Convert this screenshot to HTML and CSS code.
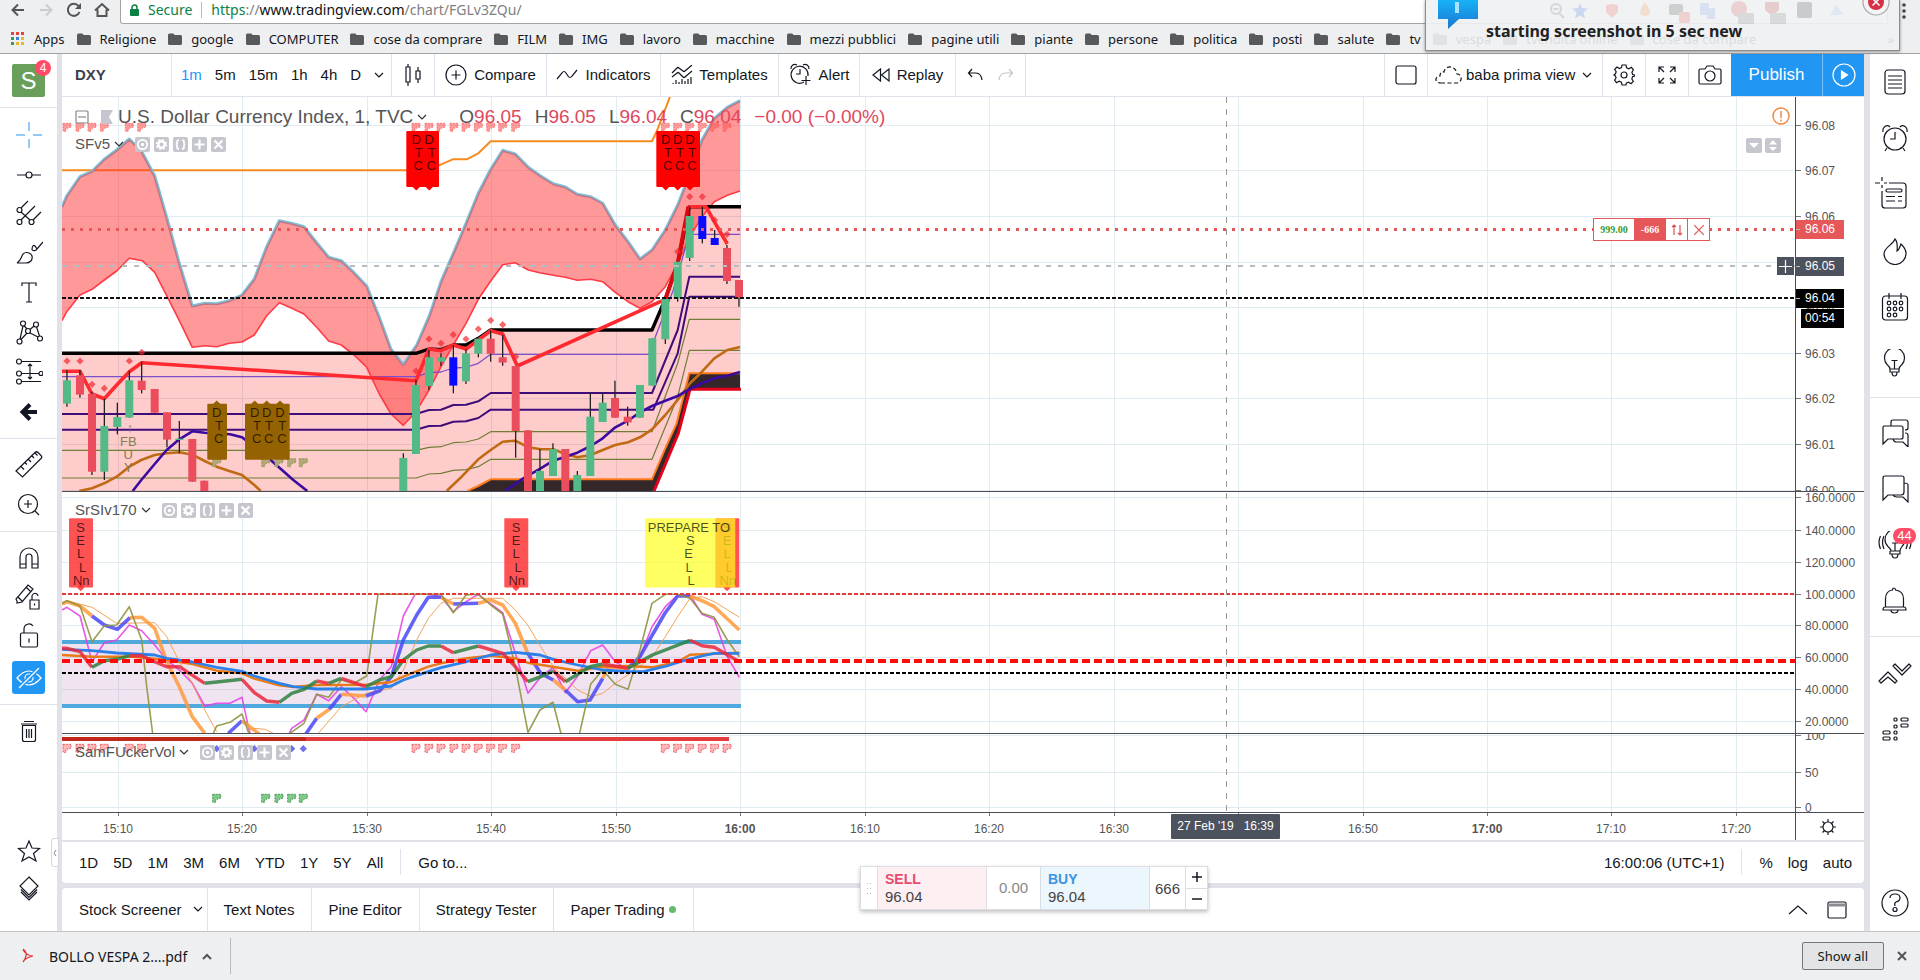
FILE: index.html
```html
<!DOCTYPE html>
<html lang="en">
<head>
<meta charset="utf-8">
<title>DXY chart</title>
<link rel="stylesheet" href="styles.css">
</head>
<body>
<svg class="defs" aria-hidden="true">
  <symbol id="folder" viewBox="0 0 14 12"><path d="M0 2a1.500 1.500 0 0 1 1.500-1.500h3.500q1 0 1.500 1.500h6a1.500 1.500 0 0 1 1.500 1.500v7a1.500 1.500 0 0 1-1.500 1.500h-11a1.500 1.500 0 0 1-1.500-1.500z" fill="#57595a"/></symbol>
  <symbol id="caret" viewBox="0 0 10 6"><path d="M1 1l4 4 4-4"/></symbol>
  <symbol id="i-eye" viewBox="0 0 15 15"><rect width="15" height="15" rx="2" fill="#c5c6ce"/><circle cx="7.500" cy="7.500" r="4.700" fill="none" stroke="#fff" stroke-width="1.800"/><circle cx="7.500" cy="7.500" r="1.700" fill="#fff"/></symbol>
  <symbol id="i-gear" viewBox="0 0 15 15"><rect width="15" height="15" rx="2" fill="#c5c6ce"/><circle cx="7.500" cy="7.500" r="3.200" fill="none" stroke="#fff" stroke-width="2.400"/><circle cx="7.500" cy="7.500" r="4.800" fill="none" stroke="#fff" stroke-width="1.600" stroke-dasharray="2 1.770"/></symbol>
  <symbol id="i-code" viewBox="0 0 15 15"><rect width="15" height="15" rx="2" fill="#c5c6ce"/><path d="M6 3q-2 0-2 2v1.500q0 1-1.200 1Q4 7.500 4 8.500V10q0 2 2 2M9 3q2 0 2 2v1.500q0 1 1.200 1-1.200 0-1.200 1V10q0 2-2 2" fill="none" stroke="#fff" stroke-width="1.700"/></symbol>
  <symbol id="i-plus" viewBox="0 0 15 15"><rect width="15" height="15" rx="2" fill="#c5c6ce"/><path d="M7.500 2.500v10M2.500 7.500h10" stroke="#fff" stroke-width="2.200"/></symbol>
  <symbol id="i-x" viewBox="0 0 15 15"><rect width="15" height="15" rx="2" fill="#c5c6ce"/><path d="M3.500 3.500l8 8M11.500 3.500l-8 8" stroke="#fff" stroke-width="2.200"/></symbol>
</svg>

<header class="browser">
  <div class="nav">
    <div class="nav-buttons">
      <button aria-label="Back"><svg width="16" height="16" viewBox="0 0 16 16"><path d="M14 8H3M8 2.500L2.500 8 8 13.500" stroke="#555" stroke-width="2"/></svg></button>
      <button aria-label="Forward"><svg width="16" height="16" viewBox="0 0 16 16"><path d="M2 8h11M8 2.500L13.500 8 8 13.500" stroke="#ccc" stroke-width="2"/></svg></button>
      <button aria-label="Reload"><svg width="16" height="16" viewBox="0 0 16 16"><path d="M13.500 10A6 6 0 1 1 12.500 4" stroke="#555" stroke-width="2"/><path d="M15 1v6H9z" fill="#555" stroke="none"/></svg></button>
      <button aria-label="Home"><svg width="16" height="16" viewBox="0 0 16 16"><path d="M1 8.500L8 2l7 6.500M3.500 7.500V14h9V7.500" stroke="#555" stroke-width="2"/></svg></button>
    </div>
    <div class="omnibox">
      <svg width="9" height="12" viewBox="0 0 9 12"><path d="M2 6V3.500a2.500 2.500 0 0 1 5 0V6" fill="none" stroke="#0b8043" stroke-width="1.500"/><rect y="5" width="9" height="7" rx="1" fill="#0b8043"/></svg>
      <span class="secure">Secure</span><span class="bar"></span>
      <span class="url"><b class="ok">https</b>://<b>www.tradingview.com</b>/chart/FGLv3ZQu/</span>
    </div>
    <svg class="dots" width="4" height="17" viewBox="0 0 4 17"><circle cx="2" cy="2" r="1.800"/><circle cx="2" cy="8" r="1.800"/><circle cx="2" cy="14" r="1.800"/></svg>
  </div>
  <nav class="bookmarks">
    <a href="#"><svg width="14" height="14" viewBox="0 0 14 14"><path d="M0 0h3v3H0zM5 0h3v3H5zM10 0h3v3h-3z" fill="#e0443a"/><path d="M0 5h3v3H0zM0 10h3v3H0z" fill="#3b9a50"/><path d="M5 5h3v3H5z" fill="#3d7fe0"/><path d="M10 5h3v3h-3zM5 10h3v3H5zM10 10h3v3h-3z" fill="#efb52c"/></svg>Apps</a>
    <a href="#"><svg width="14" height="12"><use href="#folder"/></svg>Religione</a>
    <a href="#"><svg width="14" height="12"><use href="#folder"/></svg>google</a>
    <a href="#"><svg width="14" height="12"><use href="#folder"/></svg>COMPUTER</a>
    <a href="#"><svg width="14" height="12"><use href="#folder"/></svg>cose da comprare</a>
    <a href="#"><svg width="14" height="12"><use href="#folder"/></svg>FILM</a>
    <a href="#"><svg width="14" height="12"><use href="#folder"/></svg>IMG</a>
    <a href="#"><svg width="14" height="12"><use href="#folder"/></svg>lavoro</a>
    <a href="#"><svg width="14" height="12"><use href="#folder"/></svg>macchine</a>
    <a href="#"><svg width="14" height="12"><use href="#folder"/></svg>mezzi pubblici</a>
    <a href="#"><svg width="14" height="12"><use href="#folder"/></svg>pagine utili</a>
    <a href="#"><svg width="14" height="12"><use href="#folder"/></svg>piante</a>
    <a href="#"><svg width="14" height="12"><use href="#folder"/></svg>persone</a>
    <a href="#"><svg width="14" height="12"><use href="#folder"/></svg>politica</a>
    <a href="#"><svg width="14" height="12"><use href="#folder"/></svg>posti</a>
    <a href="#"><svg width="14" height="12"><use href="#folder"/></svg>salute</a>
    <a href="#"><svg width="14" height="12"><use href="#folder"/></svg>tv</a>
    <a href="#"><svg width="14" height="12"><use href="#folder"/></svg>vespa</a>
    <a href="#"><svg width="14" height="12"><use href="#folder"/></svg>tvendita online</a>
    <a href="#"><svg width="14" height="12"><use href="#folder"/></svg>cose da compare</a>
    <span class="more">»</span>
  </nav>
</header>

<aside class="toast">
  <svg class="toast-ext" width="320" height="28" viewBox="0 0 320 28">
    <circle cx="8" cy="9" r="5" fill="none" stroke="#777" stroke-width="2"/><path d="M11 13l5 5M5.500 9h5" stroke="#777" stroke-width="2"/>
    <path d="M32 3l2 5 6 .5-4.500 4 1.500 6-5-3-5 3 1.500-6-4.500-4 6-.5z" fill="#4a86e8"/>
    <path d="M58 5l6-1 6 1v7l-6 6-6-6z" fill="#f0635f"/><path d="M97 3q6 6 5 11-4 4-10 0 0-4 4-11z" fill="#f39a48"/>
    <rect x="121" y="4" width="14" height="11" rx="2" fill="#555"/><rect x="131" y="12" width="11" height="11" rx="2" fill="#f06060"/>
    <path d="M152 3h9v12h-9zM159 8h8v11h-8z" fill="#7fa8e8"/><circle cx="191" cy="9" r="8" fill="#e05c5c"/><rect x="190" y="13" width="16" height="11" rx="1" fill="#888"/>
    <path d="M217 2h14v8l-7 6-7-6z" fill="#c84a4a"/><rect x="222" y="13" width="16" height="11" rx="1" fill="#888"/><rect x="249" y="2" width="15" height="16" rx="2" fill="#444"/><path d="M282 15l6-10 8 10z" fill="#a9c4f0"/>
  </svg>
  <svg class="bubble" width="40" height="30" viewBox="0 0 40 30"><defs><linearGradient id="bg1" x2="0" y2="1"><stop stop-color="#17b2f5"/><stop offset="1" stop-color="#1b76d0"/></linearGradient></defs><path d="M0 0h40v19H21L10 29V19H0z" fill="url(#bg1)"/><path d="M19 2v11" stroke="#a9e2ff" stroke-width="4"/></svg>
  <strong>starting screenshot in 5 sec new</strong>
  <button class="toast-close" aria-label="Close"><svg width="28" height="28" viewBox="0 0 28 28"><circle cx="14" cy="14" r="13" fill="#f4f4f4" stroke="#aaa"/><circle cx="14" cy="14" r="8" fill="#d9304a"/><path d="M10.500 10.500l7 7M17.500 10.500l-7 7" stroke="#fff" stroke-width="1.500"/></svg></button>
</aside>

<main class="app">
  <aside class="tools">
    <div class="avatar-box"><div class="avatar">S<span class="badge">4</span></div></div>
    <div class="group g1">
      <button aria-label="Cross"><svg class="blue" viewBox="0 0 28 28"><path d="M14 1v9M14 18v9M1 14h9M18 14h9"/></svg></button>
      <button aria-label="Line"><svg viewBox="0 0 28 28"><path d="M2 14h9M17 14h9"/><circle cx="14" cy="14" r="3"/></svg></button>
      <button aria-label="Pitchfork"><svg viewBox="0 0 28 28"><circle cx="4.500" cy="10" r="2.500"/><circle cx="4.500" cy="22" r="2.500"/><circle cx="16.500" cy="22" r="2.500"/><path d="M6 8l7-7M6 20L20 6M6 12l9 8M18 20l8-8"/></svg></button>
      <button aria-label="Brush"><svg viewBox="0 0 28 28"><path d="M2 23c4-2 4-6 6-9 3-3 8-1 9 2 1 4-2 7-6 7zM17 10c0-5 2-5 3-4l2 3 6-7M17 10c2 1 4 1 5-1"/></svg></button>
      <button aria-label="Text"><svg viewBox="0 0 28 28"><path d="M7 7V4h14v3M14 4v19M11 23h6"/></svg></button>
      <button aria-label="Pattern"><svg viewBox="0 0 28 28"><circle cx="8" cy="4.500" r="2.500"/><circle cx="21" cy="5.500" r="2.500"/><circle cx="13" cy="12" r="2.500"/><circle cx="4.500" cy="22.500" r="2.500"/><circle cx="25" cy="19.500" r="2.500"/><path d="M8 7L5 20M6 20.500l6-6.500M9 6.500l3 3.500M15 10.500l4-3.500M21.500 8L24.500 17M15 14l8 4"/></svg></button>
      <button aria-label="Position"><svg viewBox="0 0 28 28"><circle cx="4" cy="3.500" r="2.500"/><circle cx="4" cy="15.500" r="2.500"/><circle cx="26" cy="15.500" r="2"/><circle cx="4" cy="23.500" r="2.500"/><path d="M7 3.500h19M7 15.500h17M7 23.500h19M15 6v15M13 8l2-2 2 2M13 19l2 2 2-2"/></svg></button>
      <button aria-label="Arrow"><svg viewBox="0 0 28 28"><path d="M22 14H9M15 6.500L7.500 14l7.500 7.500" stroke-width="4"/></svg></button>
    </div>
    <div class="group g2">
      <button aria-label="Ruler"><svg viewBox="0 0 28 28"><path d="M1 20L20 1.500q1.500-1.500 3 0l3 3q1.500 1.500 0 3L7.500 26zM6 15.500l3 3M10 11.500l2 2M13 8l3 3M17 5l2 2M20 2l2.500 2.500"/></svg></button>
      <button aria-label="Zoom in"><svg viewBox="0 0 28 28"><circle cx="13" cy="13" r="9.500"/><path d="M20 20l4 4M9 13h8M13 9v8"/></svg></button>
    </div>
    <div class="group g3">
      <button aria-label="Magnet"><svg viewBox="0 0 28 28"><path d="M5 24V13a9 9 0 0 1 18 0v11h-6V13a3 3 0 0 0-6 0v11zM5 20h6M17 20h6"/></svg></button>
      <button aria-label="Lock drawing"><svg viewBox="0 0 28 28"><path d="M2 18L1 16 13 2l5 4L7 19l-5 1zM3 14l4 4M11 4l5 5M15 17h9v9h-9zM17 17v-3a3 3 0 0 1 6-1M19.500 20.500v2"/></svg></button>
      <button aria-label="Lock"><svg viewBox="0 0 28 28"><rect x="5.500" y="11" width="17" height="14" rx="1.500"/><path d="M9 11V7a5 5 0 0 1 9-3M14 16.500v4" /></svg></button>
      <button class="active" aria-label="Hide drawings"><svg viewBox="0 0 28 28"><path d="M2 14q12-14 24 0-12 14-24 0z"/><circle cx="14" cy="14" r="4"/><path d="M4 24L24 4" stroke="#2196f3" stroke-width="4"/><path d="M4 24L24 4"/></svg></button>
    </div>
    <div class="group g4">
      <button aria-label="Delete"><svg viewBox="0 0 28 28"><path d="M6 7h16M9 4.500h10M7.500 8.500v14q0 2 2 2h9q2 0 2-2v-14zM11.500 12v9M14 12v9M16.500 12v9"/></svg></button>
    </div>
    <div class="group g5">
      <button aria-label="Favorites"><svg viewBox="0 0 28 28"><path d="M14 4l3 7 7.500.5-6 5 2.500 7.500-7-4-7 4 2.500-7.500-6-5 7.500-.5z"/></svg></button>
      <button aria-label="Object tree"><svg viewBox="0 0 28 28"><path d="M14 2l9 9-9 9-9-9zM6 14.500l8 8 8-8M6 17l8 8 8-8"/></svg></button>
    </div>
    <button class="collapse" aria-label="Collapse"><svg width="4" height="8" viewBox="0 0 4 8"><path d="M3 1L1 4l2 3" stroke="#888" stroke-width="1"/></svg></button>
  </aside>

  <section class="center">
    <div class="topbar">
      <label class="seg symbol"><input type="text" value="DXY" aria-label="Symbol"></label>
      <div class="seg intervals"><button class="on">1m</button><button>5m</button><button>15m</button><button>1h</button><button>4h</button><button>D</button><button aria-label="More"><svg width="10" height="6"><use href="#caret"/></svg></button></div>
      <button class="seg candles" aria-label="Style"><svg width="16" height="22" viewBox="0 0 16 22"><path d="M3 0v3M3 18v4M1 3h4v15H1zM13 3v4M13 15v4M11 7h4v8h-4z"/></svg></button>
      <button class="seg compare"><svg width="22" height="22" viewBox="0 0 22 22"><circle cx="11" cy="11" r="10"/><path d="M11 6.500v9M6.500 11h9"/></svg>Compare</button>
      <button class="seg indicators"><svg width="22" height="12" viewBox="0 0 22 12"><path d="M1 10l5-6q2-3 4 0l2 3q2 3 4 0l5-6"/></svg>Indicators</button>
      <button class="seg templates"><svg width="22" height="20" viewBox="0 0 22 20"><path d="M1 8l5-5q1-1 2 0l4 3q1 1 2 0l7-6M1 12l5-4q1-1 2 0l4 4q1 1 2 0l7-6M2 19v-1M5 19v-4M8 19v-2M11 19v-5M14 19v-3M17 19v-5M20 19v-7"/></svg>Templates</button>
      <button class="seg alert"><svg width="23" height="23" viewBox="0 0 23 23"><path d="M15 19a8.500 8.500 0 1 1 4-6M2 6a4 4 0 0 1 6-4M14 2a4 4 0 0 1 6 4M11 6v5H7M17 13v9M12.500 17.500h9"/></svg>Alert</button>
      <button class="seg replay"><svg width="18" height="14" viewBox="0 0 18 14"><path d="M8.500 1v12L1 7zM17 1v12L9.500 7z"/></svg>Replay</button>
      <div class="seg undo"><button aria-label="Undo"><svg width="16" height="13" viewBox="0 0 16 13"><path d="M5 1L1.500 5 5 9M2 5h7q5 0 6 7"/></svg></button><button class="off" aria-label="Redo"><svg width="16" height="13" viewBox="0 0 16 13"><path d="M11 1l3.500 4L11 9M14 5H7Q2 5 1 12"/></svg></button></div>
      <span class="grow"></span>
      <button class="seg square" aria-label="Layout"><svg width="22" height="20" viewBox="0 0 22 20"><rect x="1" y="1" width="20" height="18" rx="2"/></svg></button>
      <button class="seg view"><svg width="27" height="18" viewBox="0 0 27 18"><path d="M6 17h16c6-1 5-9 0-9-1-9-12-9-13-2-4-1-4 3-4 4-6 1-5 7 1 7z" stroke-dasharray="4 2.500"/></svg>baba prima view<svg class="push" width="10" height="6"><use href="#caret"/></svg></button>
      <button class="seg square" aria-label="Settings"><svg width="22" height="22" viewBox="0 0 22 22"><path d="M9 1h4l.6 2.800 2.300 1 2.500-1.500 2 2.500-1.500 2.400.8 2.300 2 .5v1l-2 .6-.9 2.300 1.500 2.400-2.300 2.400-2.400-1.500-2.300.9L13 21H9l-.6-2.800-2.300-1-2.500 1.500-2-2.500 1.500-2.400L2.300 12 .9 11l1.400-1 .9-2.300-1.500-2.400L4 3l2.400 1.500 2.100-.9z"/><circle cx="11" cy="11" r="3"/></svg></button>
      <button class="seg square" aria-label="Full screen"><svg width="20" height="18" viewBox="0 0 20 18"><path d="M2 6V1h5M2 1l5 5M13 1h5v5M18 1l-5 5M2 12v5h5M2 17l5-5M18 12v5h-5M18 17l-5-5"/></svg></button>
      <button class="seg square" aria-label="Snapshot"><svg width="24" height="20" viewBox="0 0 24 20"><path d="M2.500 4H7l2-3h6l2 3h4.500Q23 4 23 5.500v12q0 1.500-1.500 1.500h-19Q1 19 1 17.500v-12Q1 4 2.500 4z"/><circle cx="12" cy="11" r="5"/></svg></button>
      <button class="publish">Publish</button>
      <button class="play" aria-label="Play"><svg width="24" height="24" viewBox="0 0 24 24"><circle cx="12" cy="12" r="11"/><path d="M9.500 8l6 4-6 4z" fill="#fff"/></svg></button>
    </div>

    <div class="chart">
      <svg class="pane" id="price" role="img" aria-label="Price"></svg>
      <svg class="scale" id="price-scale"></svg>
      <svg class="pane ruled" id="rsi" role="img" aria-label="SrSIv170"></svg>
      <svg class="scale ruled" id="rsi-scale"></svg>
      <svg class="pane ruled" id="vol" role="img" aria-label="Volume"></svg>
      <svg class="scale ruled" id="vol-scale"></svg>
      <svg class="pane ruled" id="time"></svg>
      <div class="scale ruled corner"><button aria-label="Scale settings"><svg width="16" height="16" viewBox="0 0 16 16"><circle cx="8" cy="8" r="5"/><path d="M8 0v3M8 13v3M0 8h3M13 8h3M2.500 2.500l2 2M11.500 11.500l2 2M13.500 2.500l-2 2M2.500 13.500l2-2"/></svg></button></div>

      <div class="legend main">
        <svg width="14" height="14" viewBox="0 0 14 14"><rect x="1" y="1" width="12" height="12" rx="1"/><path d="M3 7h8"/></svg>
        <svg class="flag" width="12" height="14" viewBox="0 0 12 14"><path d="M0 0h12L8 7l4 7H0z"/></svg>
        <span>U.S. Dollar Currency Index, 1, TVC</span><svg class="c" width="10" height="6"><use href="#caret"/></svg>
        <span class="ohlc">O<i>96.05</i></span><span class="ohlc">H<i>96.05</i></span><span class="ohlc">L<i>96.04</i></span><span class="ohlc">C<i>96.04</i></span><span class="ohlc"><i>−0.00 (−0.00%)</i></span>
      </div>
      <div class="legend l1"><span>SFv5</span><svg class="c" width="10" height="6"><use href="#caret"/></svg><span class="acts"><svg><use href="#i-eye"/></svg><svg><use href="#i-gear"/></svg><svg><use href="#i-code"/></svg><svg><use href="#i-plus"/></svg><svg><use href="#i-x"/></svg></span></div>
      <div class="legend l2"><span>SrSIv170</span><svg class="c" width="10" height="6"><use href="#caret"/></svg><span class="acts"><svg><use href="#i-eye"/></svg><svg><use href="#i-gear"/></svg><svg><use href="#i-code"/></svg><svg><use href="#i-plus"/></svg><svg><use href="#i-x"/></svg></span></div>
      <div class="legend l3"><span>SamFUckerVol</span><svg class="c" width="10" height="6"><use href="#caret"/></svg><span class="acts"><svg><use href="#i-eye"/></svg><svg><use href="#i-gear"/></svg><svg><use href="#i-code"/></svg><svg><use href="#i-plus"/></svg><svg><use href="#i-x"/></svg></span></div>
      <svg class="warn" width="18" height="18" viewBox="0 0 18 18"><circle cx="9" cy="9" r="8"/><path d="M9 4v7M9 12.500v2"/></svg>
      <div class="movers"><svg width="16" height="15" viewBox="0 0 16 15"><rect width="16" height="15" rx="2"/><path d="M3 5h10l-5 5z"/></svg><svg width="16" height="15" viewBox="0 0 16 15"><rect width="16" height="15" rx="2"/><path d="M4 6.500h8L8 2zM4 9h8l-4 4z"/></svg></div>
      <div class="position"><span class="pl">999.00</span><span class="qty">-666</span><button aria-label="Reverse"><svg width="12" height="12" viewBox="0 0 12 12"><path d="M3 11V1M1 3l2-2 2 2M9 1v10M7 9l2 2 2-2"/></svg></button><button aria-label="Close position"><svg width="10" height="10" viewBox="0 0 10 10"><path d="M0 0l10 10M10 0L0 10"/></svg></button></div>
      <button class="add" aria-label="Add order"><svg width="13" height="13" viewBox="0 0 13 13"><path d="M6.500 0v13M0 6.500h13"/></svg></button>
      <div class="cross-time"><span>27 Feb '19</span><span>16:39</span></div>
    </div>

    <div class="ranges">
      <button>1D</button><button>5D</button><button>1M</button><button>3M</button><button>6M</button><button>YTD</button><button>1Y</button><button>5Y</button><button>All</button>
      <span class="vr"></span><button>Go to...</button>
      <span class="grow"></span>
      <button>16:00:06 (UTC+1)</button><span class="vr"></span><button>%</button><button>log</button><button>auto</button>
    </div>

    <div class="tabs">
      <button>Stock Screener<svg width="10" height="6"><use href="#caret"/></svg></button><button>Text Notes</button><button>Pine Editor</button><button>Strategy Tester</button><button class="paper">Paper Trading<span class="dot"></span></button>
      <span class="grow"></span>
      <div class="win"><svg width="20" height="10" viewBox="0 0 20 10"><path d="M1 9l9-8 9 8"/></svg><svg width="20" height="18" viewBox="0 0 20 18"><rect x="1" y="1" width="18" height="16" rx="1.500"/><path d="M1 4h18" stroke-width="3" stroke="#8b8b93"/></svg></div>
    </div>

    <div class="trade">
      <span class="grip"></span>
      <button class="sell"><b>SELL</b>96.04</button>
      <span class="spread">0.00</span>
      <button class="buy"><b>BUY</b>96.04</button>
      <input type="text" value="666" aria-label="Quantity">
      <div class="step"><button aria-label="More units"><svg width="10" height="10" viewBox="0 0 10 10"><path d="M5 0v10M0 5h10"/></svg></button><button aria-label="Fewer units"><svg width="10" height="10" viewBox="0 0 10 10"><path d="M0 5h10"/></svg></button></div>
    </div>
  </section>

  <aside class="side">
    <div class="sgroup s1">
      <button aria-label="Watchlist"><svg viewBox="0 0 28 28"><rect x="4" y="2" width="20" height="24" rx="3"/><path d="M7 8h14M7 12h14M7 16h14M7 20h14"/></svg></button>
      <button aria-label="Alerts"><svg viewBox="0 0 28 28"><circle cx="14" cy="15" r="11"/><path d="M14 8v7H9M2 8C1 3 6 0 9 3M26 8c1-5-4-8-7-5M6 24l-2 3M22 24l2 3"/></svg></button>
      <button class="data" aria-label="Data window"><svg viewBox="0 0 34 32"><path d="M14 6h14q3 0 3 3v19q0 3-3 3H10q-3 0-3-3V14M7 0v4M7 8v3M0 6h5M9 6h3"/><rect x="11" y="12" width="16" height="3" rx="1.500"/><path d="M11 19.500h9M23 19.500h4M11 24h9M23 24h4"/></svg></button>
      <button aria-label="Hotlist"><svg viewBox="0 0 28 28"><path d="M14 2q3 3 2 12 2-1 4-7c3 3 5 6 5 9a11 11 0 0 1-22 1c0-7 9-9 11-15z"/></svg></button>
      <button aria-label="Calendar"><svg viewBox="0 0 28 28"><rect x="1.500" y="3" width="25" height="24" rx="3"/><path d="M8 0v6M20 0v6"/><circle cx="8" cy="10" r="1.800"/><circle cx="14" cy="10" r="1.800"/><circle cx="20" cy="10" r="1.800"/><circle cx="8" cy="16" r="1.800"/><circle cx="14" cy="16" r="1.800"/><circle cx="20" cy="16" r="1.800"/><circle cx="8" cy="22" r="1.800"/><circle cx="14" cy="22" r="1.800"/></svg></button>
      <button aria-label="Ideas"><svg viewBox="0 0 28 28"><path d="M9 20q0-2-3-4.500a10 10 0 1 1 15 0Q18 18 18 20zM9 20v3h9v-3M11 23q0 4 2.500 4t2.500-4M13.500 20v-9M10.500 11.500h6"/></svg></button>
    </div>
    <div class="sgroup s2">
      <button aria-label="Public chats"><svg viewBox="0 0 28 28"><path d="M10 7V3q0-2 2-2h13q2 0 2 2v6q0 2-3 2M3 7h17q2 0 2 2v9q0 2-2 2H7l-5 5V9q0-2 1-2zM24 14q3 0 3 2v12l-5-5h-7q-2 0-3-3"/></svg></button>
      <button aria-label="Private chats"><svg viewBox="0 0 28 28"><path d="M4 1h17q2 0 2 2v14q0 3-3 3H7l-5 5V3q0-2 2-2zM23 8q4 0 4 2v17l-5-5h-6q-3 0-4-2"/></svg></button>
      <button class="stream" aria-label="Ideas stream"><svg viewBox="0 0 34 28"><path d="M13 20q0-2-3-4.500a10 10 0 1 1 14 0Q22 18 22 20zM12 20v3h10v-3M14 23q0 4 3 4t3-4M17 20v-8M14 12h6M6 5q-3 6 0 13M2.500 5q-3 6 0 13M28 5q3 6 0 13M31.500 5q3 6 0 13"/></svg><span class="badge">44</span></button>
      <button aria-label="Notifications"><svg viewBox="0 0 28 28"><path d="M4.500 20V12q0-8 7-9 0-2 1.500-2t1.500 2q8 1 8 9v8M4 20h19q2 0 2 3H2q0-3 2-3zM10 23q0 3 3.500 3t3.500-3"/></svg></button>
    </div>
    <div class="sgroup s3">
      <button aria-label="Order panel"><svg viewBox="0 0 34 28"><path d="M1 22L10 13l9 9-2 2-7-6-7 6zM15 7l2-2 7 7 7-7 2 2-9 9z" stroke-linejoin="round"/></svg></button>
      <button aria-label="DOM"><svg viewBox="0 0 28 28"><rect x="13" y="3" width="3" height="3" rx="1"/><rect x="20" y="3" width="7" height="3" rx="1"/><rect x="13" y="10" width="3" height="3" rx="1"/><rect x="20" y="9" width="7" height="3" rx="1"/><rect x="2" y="16" width="7" height="3" rx="1"/><rect x="13" y="16" width="3" height="3" rx="1"/><rect x="2" y="22" width="7" height="3" rx="1"/><rect x="13" y="22" width="3" height="3" rx="1"/></svg></button>
    </div>
    <button class="help" aria-label="Help"><svg viewBox="0 0 28 28"><circle cx="14" cy="14" r="13"/><path d="M9 9q0-4 5-4t5 4q0 3-4 4-2 1-1 4"/><circle cx="14" cy="20.500" r="2"/></svg></button>
  </aside>
</main>

<footer class="downloads">
  <button class="file"><svg width="12" height="16" viewBox="0 0 12 16"><path d="M1 1q4 3 3 7-1 4-3 6M1 2q4 6 10 6-5 1-9 4" stroke="#d33" fill="none"/></svg>BOLLO VESPA 2....pdf<svg class="up" width="10" height="7" viewBox="0 0 10 7"><path d="M1 6l4-4 4 4" fill="none" stroke="#555" stroke-width="2"/></svg></button>
  <span class="grow"></span>
  <button class="all">Show all</button>
  <button class="x" aria-label="Close"><svg width="10" height="10" viewBox="0 0 10 10"><path d="M1 1l8 8M9 1L1 9" stroke="#555" stroke-width="2"/></svg></button>
</footer>
<script src="chart.js"></script>
</body>
</html>
```

FILE: styles.css
```css
* { box-sizing: border-box; }
html, body { height: 100%; }
body { margin: 0; display: flex; flex-direction: column; overflow: hidden; background: #fff; color: #131722; font: 15px "Liberation Sans", Arial, sans-serif; }
button, input { font: inherit; color: inherit; background: none; border: 0; padding: 0; margin: 0; }
button { display: flex; align-items: center; cursor: pointer; white-space: nowrap; }
a { color: inherit; text-decoration: none; }
svg { display: block; flex: none; fill: none; stroke: #131722; stroke-width: 1.2; }
.defs { position: absolute; width: 0; height: 0; }
symbol { stroke: inherit; }
.grow { flex: 1; }

.browser { flex: none; height: 54px; border-bottom: 1px solid #a2a2a2; background: #eeeff1; font: 14px/16px "Noto Sans", sans-serif; overflow: hidden; }
.nav { display: flex; align-items: flex-start; height: 24px; }
.nav-buttons { display: flex; gap: 12px; padding: 2px 10px; width: 120px; }
.omnibox { flex: 1; height: 24px; margin-right: 14px; padding: 0 0 4px 9px; display: flex; align-items: center; gap: 9px; background: #fff; border: 1px solid #a5a5a5; border-top: 0; border-radius: 0 0 3px 3px; font-size: 14px; }
.omnibox svg, .bookmarks svg, .dots, .file svg { stroke: none; }
.secure, .url .ok { color: #0b8043; }
.bar { width: 1px; height: 16px; background: #bbb; }
.url { color: #808080; }
.url b { font-weight: 400; color: #111; }
.url b.ok { color: #0b8043; }
.dots { fill: #444; margin: 3px 14px 0 0; }
.bookmarks { display: flex; align-items: center; gap: 12px; height: 30px; padding: 0 26px 0 11px; white-space: nowrap; font-size: 13px; }
.bookmarks a { display: flex; align-items: center; gap: 9px; }
.more { margin-left: auto; }

.toast { position: absolute; z-index: 5; top: 0; right: 20px; width: 475px; height: 51px; padding: 23px 0 0 60px; background: rgba(239, 241, 242, .9); border: 1px solid #8d8d8d; border-top: 0; box-shadow: 0 1px 3px rgba(0, 0, 0, .4); font: 16px/16px "Noto Sans", sans-serif; color: #222; white-space: nowrap; }
.toast svg { stroke: none; }
.bubble { position: absolute; left: 12px; top: 0; }
.toast-ext { position: absolute; left: 122px; top: 0; opacity: .22; }
.toast-close { position: absolute; right: 9px; top: -12px; }

.app { flex: 1; min-height: 0; display: flex; background: #e1e1ea; }
.tools { position: relative; width: 57px; margin-right: 5px; background: #fff; display: flex; flex-direction: column; }
.avatar-box { height: 54px; padding: 10px 12px; border-bottom: 1px solid #e0e3eb; }
.avatar { position: relative; width: 33px; height: 33px; border-radius: 2px; background: #6a9f5b; color: #fff; font-size: 24px; line-height: 33px; text-align: center; }
.badge { position: absolute; background: #ff4a68; color: #fff; font-size: 12px; line-height: 16px; height: 16px; min-width: 16px; border-radius: 8px; text-align: center; }
.avatar .badge { top: -4px; right: -6px; }
.group { display: flex; flex-direction: column; align-items: center; justify-content: space-between; padding: 12px 0; border-bottom: 1px solid #e0e3eb; }
.group svg { width: 28px; height: 28px; }
.group svg.blue { stroke: #72b9f5; stroke-width: 1.5; }
.g1 { height: 331px; padding-top: 13px; }
.g2 { height: 93px; }
.g3 { height: 173px; padding-bottom: 10px; }
.g3 .active { width: 33px; height: 33px; justify-content: center; background: #2196f3; border-radius: 3px; }
.active svg { stroke: #fff; }
.g4, .g5 { border: 0; }
.g5 { height: 90px; margin-top: auto; margin-bottom: 16px; }
.collapse { position: absolute; right: -2px; top: 784px; width: 8px; height: 29px; border: 1px solid #d5d6de; border-radius: 3px 0 0 3px; background: #fff; justify-content: center; }

.center { position: relative; flex: 1; min-width: 0; display: flex; flex-direction: column; }
.topbar { flex: none; display: flex; height: 43px; background: #fff; border-bottom: 1px solid #e0e3eb; }
.seg { display: flex; flex: none; align-items: center; justify-content: center; gap: 7px; padding-bottom: 1px; border-right: 1px solid #e0e3eb; }
.symbol { width: 110px; padding: 0 13px 1px; }
.symbol input { width: 100%; font-weight: 700; color: #3c404b; }
.intervals { gap: 13px; width: 220px; padding: 0 0 1px 9px; justify-content: flex-start; }
.intervals .on { color: #2196f3; }
.candles, .square { width: 43px; }
.compare { width: 112px; }
.indicators { width: 114px; }
.templates { width: 118px; gap: 6px; }
.alert { width: 81px; }
.replay { width: 96px; }
.undo { gap: 15px; width: 70px; }
.off svg { stroke: #c4c6cc; }
.square { border-right: 0; border-left: 1px solid #e0e3eb; }
.view { width: 175px; padding: 0 7px 1px; gap: 4px; border-left: 1px solid #e0e3eb; border-right: 0; justify-content: flex-start; }
.push { margin-left: auto; margin-right: 3px; }
.publish { width: 91px; justify-content: center; background: #2196f3; color: #fff; font-size: 17px; }
.play { width: 42px; justify-content: center; background: #2196f3; border-left: 1px solid #79bff8; }
.play svg { stroke: #fff; }

.chart { position: relative; flex: none; display: grid; grid-template-columns: 1fr 69px; grid-template-rows: 394px 242px 79px 28px; background: #fff; }
.pane, .scale { width: 100%; height: 100%; overflow: hidden; stroke-width: 1; }
.pane { stroke: none; }
.scale { border-left: 1px solid #4a4d55; }
.ruled { border-top: 1px solid #4a4d55; }
.chart text { font: 12px "Liberation Sans", Arial, sans-serif; fill: #555; stroke: none; }
.chart text.tag { font-size: 13px; fill: #000; fill-opacity: .7; }
.chart text.olive { font-size: 13px; fill: #857c4c; }
.chart text.bold { font-weight: 700; }
.chart text.light { fill: #fff; }
.corner { display: flex; align-items: center; justify-content: center; padding-right: 5px; }
.legend { position: absolute; left: 13px; display: flex; align-items: center; color: #555; font-size: 15px; line-height: 18px; white-space: nowrap; }
.legend.main { top: 9px; font-size: 19px; line-height: 22px; }
.legend.main > svg:first-child { stroke: #888; }
.legend .flag { margin: 0 5px 0 12px; fill: #c5c6ce; stroke: none; }
.legend .c { margin-left: 4px; stroke: #333; }
.legend.main .c { margin: 0 20px 0 4px; }
.ohlc { margin-left: 13px; }
.ohlc:nth-of-type(2) { margin-left: 12px; }
.ohlc i { font-style: normal; color: #e0485d; }
.acts { display: flex; gap: 4px; margin-left: 11px; }
.acts svg { width: 15px; height: 15px; stroke: none; }
.l1 { top: 38px; }
.l2 { top: 404px; }
.l3 { top: 646px; }
.warn { position: absolute; top: 10px; right: 74px; stroke: #f08a45; stroke-width: 1.5; }
.movers { position: absolute; top: 41px; right: 83px; display: flex; gap: 3px; }
.movers svg { stroke: none; fill: #fff; }
.movers rect { fill: #c5c6ce; }
.position { position: absolute; top: 121px; right: 154px; display: flex; height: 23px; border: 1px solid #e6575a; background: #fff; font: bold 10px/21px "Liberation Serif", serif; }
.position > * { width: 22px; justify-content: center; text-align: center; border-left: 1px solid #e6575a; }
.position .pl { width: 40px; border: 0; color: #3d9b2f; }
.position .qty { width: 31px; background: #e6575a; color: #fff; }
.position svg { stroke: #d9534f; }
.add { position: absolute; top: 160px; right: 70px; width: 17px; height: 18px; justify-content: center; background: #4c525e; }
.add svg { stroke: #fff; }
.cross-time { position: absolute; top: 717px; left: 1109px; width: 109px; height: 25px; display: flex; gap: 10px; justify-content: center; background: #4c525e; color: #fff; font-size: 12px; line-height: 25px; border-radius: 1px; white-space: nowrap; }

.ranges { flex: none; display: flex; align-items: center; gap: 15px; height: 43px; padding: 0 12px 1px 17px; background: #fff; border-top: 2px solid #e1e1ea; border-radius: 0 0 4px 4px; }
.vr { width: 1px; height: 26px; margin: 0 2px; background: #e0e3eb; }
.tabs { flex: 1; display: flex; margin-top: 5px; background: #fff; border-radius: 4px 4px 0 0; }
.tabs button { gap: 12px; padding: 0 17px 1px 16px; border-right: 1px solid #e0e3eb; }
.tabs button:first-child { padding: 0 4px 1px 17px; gap: 11px; }
.tabs .paper { gap: 4px; }
.dot { width: 7px; height: 7px; border-radius: 50%; background: #66bb6a; }
.win { display: flex; align-items: center; gap: 19px; padding-right: 17px; }
.trade { position: absolute; left: 798px; top: 812px; width: 348px; height: 44px; display: flex; background: #fff; border: 1px solid #dcdde4; box-shadow: 0 2px 4px rgba(0, 0, 0, .25); font-size: 15px; line-height: 17px; color: #444; }
.grip { width: 6px; margin: 14px 5px; background: radial-gradient(circle, #bbb 1px, transparent 1px) 0 0 / 3px 5px; }
.trade .sell, .trade .buy { width: 110px; flex-direction: column; align-items: flex-start; justify-content: center; padding-left: 7px; background: #fdeff2; border: 0 solid #dcdde4; border-width: 0 1px; }
.trade .buy { background: #ebf6fd; }
.trade b { font-size: 14px; }
.sell b { color: #e94b6f; }
.buy b { color: #3b93e0; }
.spread { width: 53px; text-align: center; line-height: 42px; color: #888; }
.trade input { width: 35px; text-align: center; }
.step { flex: 1; border-left: 1px solid #dcdde4; display: flex; flex-direction: column; }
.step button { flex: 1; justify-content: center; }
.step button + button { border-top: 1px solid #dcdde4; }
.step svg { stroke-width: 1.5; }

.side { width: 50px; margin-left: 6px; background: #fff; display: flex; flex-direction: column; }
.sgroup { display: flex; flex-direction: column; align-items: center; justify-content: space-between; border-bottom: 1px solid #e0e3eb; }
.side svg { width: 28px; height: 28px; }
.s1 { height: 344px; padding: 14px 0 20px; }
.side .data svg { width: 34px; height: 32px; margin: -3px 6px -1px 0; }
.s2 { height: 239px; padding: 21px 0; }
.s3 { height: 127px; padding: 22px 0 21px; border: 0; }
.stream { position: relative; }
.side .stream svg, .s3 button:first-child svg { width: 34px; }
.stream .badge { top: -3px; right: -4px; width: 23px; font-size: 13px; }
.help { margin: auto auto 14px; }

.downloads { flex: none; display: flex; align-items: center; height: 49px; padding-right: 13px; background: #eeeff1; border-top: 1px solid #c4c4c4; font: 14px "Noto Sans", sans-serif; }
.file { height: 36px; padding: 0 18px 0 22px; gap: 15px; border-right: 1px solid #bbb; }
.all { height: 28px; padding: 0 15px; margin-right: 13px; border: 1px solid #777; border-radius: 2px; background: #e2e4e6; font-size: 13px; }
```

FILE: chart.js
```js
const NS = 'http://www.w3.org/2000/svg';
const LEFT = 62;

/* A pane draws in window coordinates; its series are stored at three units per pixel. */
function pane(id, top, base, left = LEFT) {
  const g = document.createElementNS(NS, 'g');
  g.setAttribute('transform', `translate(${-left} ${-top})`);
  document.getElementById(id).append(g);
  const add = (tag, attrs, text) => {
    const el = document.createElementNS(NS, tag);
    for (const k in attrs) el.setAttribute(k, attrs[k]);
    if (text) el.textContent = text;
    g.append(el);
  };
  const r = n => Math.round(n * 10) / 10;
  const pts = s => {
    const [a, b = ''] = s.split('|');
    const conv = (part, dx) => part.trim().split(/\s+/).filter(Boolean).map(p => {
      const [x, y] = p.split(',').map(Number);
      return r((x + dx) / 3) + ',' + r(y / 3 + base);
    });
    return conv(a, 0).concat(conv(b, 1140));
  };
  const line = (s, color, w, o = 1) => add('polyline', { points: pts(s).join(' '), fill: 'none', stroke: color, 'stroke-width': w, 'stroke-opacity': o, 'stroke-linejoin': 'round' });
  const area = (s1, s2, fill) => add('polygon', { points: pts(s1).concat(pts(s2).reverse()).join(' '), fill });
  const rule = (y, color, w, dash = '', x2 = 4000) => add('line', { x1: LEFT, x2, y1: y, y2: y, stroke: color, 'stroke-width': w, 'stroke-dasharray': dash });
  const rect = (x, y, x2, y2, fill, rx = 0) => add('rect', { x: r(x / 3), y: r(y / 3 + base), width: r((x2 - x) / 3), height: r((y2 - y) / 3), fill, rx });
  const text = (x, y, t, cls = 'tag') => add('text', { x: r(x / 3), y: r(y / 3 + base + 4.5), 'text-anchor': 'middle', class: cls }, t);
  const diamond = (x, y, fill) => { x = x / 3; y = y / 3 + base; add('path', { d: `M${r(x)} ${r(y - 3.6)}l3.6 3.6-3.6 3.6-3.6-3.6z`, fill }); };
  const flag = (x, y, fill, edge) => { x = r(x / 3 - 4); y = r(y / 3 + base - 4); add('path', { d: `M${x} ${y}h8v4h-3v1h-2v3h-3z`, fill, stroke: edge, 'stroke-width': 1, 'stroke-dasharray': '2 1' }); };
  return { add, line, area, rule, rect, text, diamond, flag };
}

const ticks = Array.from({ length: 14 }, (_, i) => 118 + Math.round(i * 124.45));
function grid(p, levels) {
  ticks.forEach(x => p.add('line', { x1: x + .5, x2: x + .5, y1: 0, y2: 900, stroke: '#e1ecf2' }));
  levels.forEach(y => p.rule(y + .5, '#e1ecf2', 1));
}
const crosshair = p => p.add('line', { x1: 1226.5, x2: 1226.5, y1: 97, y2: 812, stroke: '#999', 'stroke-dasharray': '6 6' });

/* ---- price ---- */
const P = pane('price', 97, 90);
const prices = [125, 170, 216, 262, 307, 353, 398, 444, 490];
grid(P, prices);
const upper = '186,350 200,318 240,260 276,244 313,208 350,180 388,147 424,182 464,258 500,382 538,520 577,648 614,640 650,641 688,632 726,615 763,567 800,470 838,392 874,400 912,410 950,458 986,502 1024,512 1062,548 1100,588 1138,682 | 33,778 70,824 110,765 147,680 183,575 220,490 258,400 295,310 332,238 368,181 406,192 445,232 482,258 520,281 556,291 592,313 632,320 668,340 706,405 744,455 780,507 816,480 856,420 893,345 930,250 966,150 1003,85 1042,52 1080,32';
const lower = '186,692 200,665 240,615 276,598 313,570 350,543 388,505 427,512 464,547 500,617 538,692 577,772 614,767 650,770 688,760 726,756 763,735 800,677 838,638 874,654 912,672 950,712 986,753 1024,765 1062,795 1100,832 1138,912 | 33,972 70,1006 108,965 147,900 183,830 220,765 258,700 295,628 332,573 368,524 406,518 445,540 482,549 520,556 556,562 592,571 632,568 668,575 706,607 744,635 780,655 816,635 856,590 893,520 930,440 966,380 1003,335 1042,316 1080,303';
const black = '186,790 | 108,790 147,777 183,779 220,765 258,765 295,745 332,720 816,720 856,627 893,520 928,350 1083,350';
const floorTop = '|262,1203 295,1188 332,1168 816,1168 856,1075 890,1000 928,850 1080,850';
const floorBottom = '|262,1210 820,1203 895,1030 930,898 1080,898';
P.area(black, '186,1210 |820,1205 895,1030 930,898 1080,898', 'rgba(255,0,0,.2)');
P.line('186,241 | 80,241 177,226 218,208 260,208 295,190 332,154 816,154 832,120 870,20', '#f58a1f', 2);
P.line(upper, '#7cc0dc', 3);
P.area(upper, lower, 'rgba(255,50,50,.5)');
P.line(lower, '#ff3b46', 1.6);
P.line(black, '#000', 3.4);
P.area(floorTop, floorBottom, '#33272a');
P.line('186,860 | 108,860 147,848 183,846 220,834 258,832 295,820 332,793 806,793 880,600 928,433 1080,433', '#7e4fc8', 1.3);
for (const [s, c, w] of [
  ['186,972 | 108,972 147,960 183,959 220,945 258,944 295,934 332,909 816,909 893,720 928,560 1080,560', '#3f0d7a', 2],
  ['186,1019 | 108,1019 147,1008 183,1007 220,995 258,994 295,984 332,959 820,959 893,790 928,620 1080,620', '#3f0d7a', 2],
  ['186,1081 | 108,1081 147,1072 183,1070 220,1058 258,1056 295,1047 332,1025 816,1025 893,820 928,688 1080,688', '#6f7d35', 1.2],
  ['186,1164 | 108,1164 147,1152 183,1150 220,1141 258,1139 295,1130 332,1108 816,1108 893,920 928,781 1080,781', '#6f7d35', 1.2]
]) P.line(s, c, w);
P.line(floorTop, '#ff7a1a', 2);
P.line('|822,1203 895,1030 930,898 1083,898', '#e3001b', 3);
P.line('238,1203 276,1195 313,1180 350,1160 388,1130 424,1110 464,1095 500,1090 538,1087 577,1094 614,1113 650,1130 688,1143 726,1155 763,1185 782,1203', '#c06a14', 2.6);
P.line('|200,1203 240,1165 295,1108 332,1080 368,1055 406,1052 445,1072 482,1078 520,1078 556,1092 592,1102 632,1095 668,1080 706,1065 744,1057 780,1042 816,1018 856,975 893,930 930,880 966,845 1003,805 1042,780 1080,771', '#c06a14', 2.6);
P.line('398,1203 424,1170 464,1122 500,1080 538,1048 577,1024 614,1028 690,1033 726,1042 763,1070 812,1110 840,1135 880,1170 922,1203', '#3a0aa0', 2.6);
P.line('|375,1203 430,1165 482,1135 520,1112 556,1100 592,1088 632,1068 668,1045 706,1012 744,992 780,967 816,948 856,932 893,918 930,897 966,880 1003,865 1042,857 1080,846', '#3a0aa0', 2.6);
P.line('186,844 240,844 276,912 313,926 350,885 388,845 425,818 | 108,872 147,777 183,782 220,765 258,777 295,750 332,722 368,732 412,828 856,628', '#ff2a30', 3.6);
P.line('|856,628 893,520 925,350', '#d80a10', 4);
P.line('|925,350 978,350 1003,395 1042,462', '#ff2a30', 3.6);

const R = '#eb4d5c', G = '#53b987', B = '#0a0aff';
/* x, high, low, body top, body bottom, colour */
[[201,840,950,871,941,G],[240,840,923,856,914,R],[276,905,1155,911,1145,R],[313,926,1170,1008,1145,G],[352,938,1033,981,1011,G],[388,842,983,871,983,G],[425,815,910,872,900,R],[464,897,968,897,968,R],[501,967,1072,967,1049,R],[538,993,1090,1046,1050,G],[577,1047,1175,1047,1175,R],[613,1172,1203,1172,1206,R],
[1210,1090,1203,1104,1206,G],[1248,870,1092,885,1092,G],[1287,780,900,802,888,G],[1323,790,828,802,815,G],[1360,765,910,802,887,B],[1398,778,882,790,874,G],[1435,745,802,746,791,G],[1472,722,815,746,791,R],[1508,735,827,802,818,R],[1547,828,1103,828,1023,R],[1584,1021,1203,1021,1206,R],[1620,1078,1203,1143,1206,G],[1659,1060,1158,1077,1158,G],[1696,1077,1203,1077,1206,R],[1732,1143,1203,1155,1206,G],[1771,910,1158,980,1158,G],[1808,910,996,938,996,G],[1845,872,983,924,983,R],[1883,950,1007,980,997,R],[1920,885,983,885,983,G],[1957,745,887,745,887,G],[1996,627,762,627,748,G],[2033,515,635,515,625,G],[2069,350,513,378,504,G],[2107,350,460,378,447,B],[2144,420,465,444,465,B],[2181,465,582,474,573,R],[2217,570,650,570,624,R]
].forEach(([x, h, l, t, b, c]) => { P.rect(x - 2, h, x + 2, l, '#222'); P.rect(x - 12, t, x + 12, b, c); });

[[201,813],[240,813],[276,883],[313,895],[388,813],[425,787],[1248,843],[1287,747],[1323,760],[1360,734],[1398,747],[1435,717],[1472,691],[1508,704],[1547,800],[2033,485],[2069,320],[2107,320],[2144,390],[2181,433]].forEach(([x, y]) => P.diamond(x, y, 'rgba(240,40,50,.7)'));
const reds = [201, 240, 276, 313, 388, 425, 1248, 1287, 1323, 1362, 1398, 1435, 1472, 1508, 1547, 1996, 2033, 2069, 2107, 2144, 2181];
const greens = [650, 797, 837, 875, 910];
reds.forEach(x => P.flag(x, 112, 'rgba(255,90,90,.6)', 'rgba(255,90,90,.7)'));
greens.forEach(x => P.flag(x, 1118, '#b5a878', '#8f9a5a'));
P.text(390, 1013, '↑', 'olive'); P.text(385, 1053, 'FB', 'olive'); P.text(385, 1092, 'U', 'olive'); P.text(385, 1131, 'Y', 'olive');

function marker(x1, x2, top, fill, cols, down) {
  P.rect(x1, top, x2, top + 168, fill, 1);
  cols.forEach(x => {
    P.diamond(x, down ? top + 168 : top + 1, fill);
    P.text(x, top + 25, 'D'); P.text(x + 7, top + 64, 'T'); P.text(x + 6, top + 103, 'C');
  });
}
marker(1219, 1317, 123, '#ff0000', [1249, 1288], true);
marker(1969, 2100, 123, '#ff0000', [1997, 2033, 2070], true);
marker(622, 681, 941, '#946200', [650], false);
marker(735, 869, 941, '#946200', [764, 800, 840], false);
P.rule(229.5, '#e6575a', 3, '3 6');
P.rule(266, '#b9bbc0', 2, '5 7');
P.rule(298, '#111', 2, '4 2');
crosshair(P);

/* ---- oscillator ---- */
const S = pane('rsi', 492, 480);
const levels = [497, 530, 562, 594, 625, 657, 689, 721];
grid(S, levels);
S.rect(186, 486, 2220, 678, 'rgba(180,120,180,.2)');
S.rule(642, '#4fa9dc', 4, '', 741); S.rule(706, '#4fa9dc', 4, '', 741);
['186,390 201,382 240,408 276,545 313,488 350,480 388,435 425,452 464,495 500,540 538,570 577,610 614,678 650,670 690,670 726,652 745,740 752,765', '868,760 875,745 912,720 950,643 986,662 1024,620 1062,655 1098,695 1138,600 1174,560 | 70,408 105,343 147,343 183,350 220,395 258,365 295,343 332,372 368,398 406,520 444,640 482,590 519,563 556,638 592,590 632,512 668,495 706,545 744,570 780,530 816,440 856,380 893,345 930,345 966,403 1003,418 1042,530 1078,592'].forEach(s => S.line(s, '#e53be5', 1.6, .85));
['201,362 276,382 350,430 464,428 500,470 538,545 577,610 614,690 650,755', '740,752 760,745 796,748 830,765', '955,760 1024,680 1098,640 1174,625 1210,570 1250,480 1285,415 1323,370 1360,355 1508,355 1546,390 1583,435 1622,500 1660,560 1733,630 1775,650 1808,640 1846,610 1883,585 1957,530 1996,470 2033,410 2070,355 2106,350 2143,365 2218,412'].forEach(s => S.line(s, '#f39a48', 1, .9));
const O2 = '#ff9a3c', B2 = '#4a48f5', R2 = '#e8283c', G2 = '#2e8140';
[[O2,'186,372 201,365 240,378 276,408'],[B2,'276,408 313,435 352,448 390,413'],[O2,'390,413 425,412 464,445 500,545 538,620 577,710 614,760'],[B2,'685,760 726,722'],[O2,'726,722 778,762'],[B2,'916,764 950,715'],[O2,'950,715 988,688'],[B2,'988,688 1024,643'],[O2,'1024,643 1098,648'],[B2,'1098,648 1140,632 1174,590 1210,480 1250,405 1285,352 1323,352'],[O2,'1323,352 1360,372'],[B2,'1360,372 1435,370'],[O2,'1435,370 1472,360 1508,375 1546,430 1583,520'],[B2,'1583,520 1622,580 1660,600'],[O2,'1660,600 1696,630'],[B2,'1696,630 1733,665 1770,660 1808,595'],[O2,'1808,595 1825,562 1883,565'],[B2,'1883,565 1920,530 1957,465 1996,398 2033,348 2070,348'],[O2,'2070,348 2106,362 2143,380 2218,450']].forEach(([c, s]) => S.line(s, c, 3.6, .85));
['186,370 201,362 240,378 276,485 313,437 350,435 388,380 425,480 440,620 458,762', '640,760 650,738 690,727 726,702 748,764', '864,764 912,730 950,643 986,652 1024,600 1062,610 1100,588 1134,343 1323,343 1360,398 1398,345 1435,343 1472,375 1508,402 1546,560 1584,757 1620,690 1659,667 1684,764', '|598,764 632,612 668,570 706,613 744,628 780,510 816,370 856,343 893,343 930,355 966,400 1003,412 1042,480 1078,530'].forEach(s => S.line(s, '#8f9440', 1.6, .9));
S.line('186,525 276,530 400,530 500,540 577,552 650,572 726,580 763,596 838,616 880,621 950,615 1098,614 1174,606 1210,590 1285,560 1323,550 1400,535 1472,527 1546,535 1583,548 1733,572 1808,560 1883,558 1957,562 2033,545 2070,524 2218,518', '#e87a1a', 2.4);
S.line('186,508 276,512 350,519 464,525 500,535 577,546 650,562 726,574 763,588 838,610 880,620 950,627 1098,627 1174,618 1210,600 1285,575 1323,563 1400,545 1472,525 1546,517 1620,525 1660,538 1733,555 1808,570 1883,575 1930,575 2000,558 2040,545 2106,528 2143,520 2218,520', '#2c80e8', 2.8);
[[R2,'186,505 201,505 240,515 276,562'],[G2,'276,562 313,542 350,538 388,527'],[R2,'388,527 425,527 464,545 500,560 538,560 614,610'],[G2,'614,610 650,606 726,598'],[R2,'726,598 763,638 800,663 838,667'],[G2,'838,667 875,640 912,628 950,603'],[R2,'950,603 986,610'],[G2,'986,610 1024,595'],[R2,'1024,595 1098,620'],[G2,'1098,620 1138,600 1174,590 1210,540 1250,510 1285,498 1323,498'],[R2,'1323,498 1360,518'],[G2,'1360,518 1435,498'],[R2,'1435,498 1508,520 1546,560 1583,605'],[G2,'1583,605 1622,590 1660,573'],[R2,'1660,573 1696,605'],[G2,'1696,605 1770,560 1808,552'],[R2,'1808,552 1883,565'],[G2,'1883,565 1920,545 1957,525 2070,481'],[R2,'2070,481 2106,497 2143,502 2218,545']].forEach(([c, s]) => S.line(s, c, 3.4, .85));
S.rule(594, '#e53935', 2, '4 2');
S.rule(661, '#ff0a0a', 4, '8 4');
S.rule(673, '#000', 2, '4 2');
function sell(x) {
  S.rect(x - 35, 115, x + 37, 323, 'rgba(255,40,40,.8)', 1);
  S.diamond(x, 323, 'rgba(255,40,40,.8)');
  [['S', 0, 141], ['E', 0, 181], ['L', 0, 220], ['L', 6, 261], ['Nn', 2, 301]].forEach(([t, dx, y]) => S.text(x + dx, y, t));
}
sell(242); sell(1548); sell(2181);
S.rect(1935, 115, 2206, 323, 'rgba(255,255,30,.7)', 1);
S.text(2067, 141, 'PREPARE TO');
[['S', 2071, 181], ['E', 2066, 220], ['L', 2067, 261], ['L', 2073, 301]].forEach(([t, x, y]) => S.text(x, y, t));
crosshair(S);

/* ---- volume ---- */
const V = pane('vol', 734, 480);
const volLevels = [735, 772, 807];
grid(V, volLevels);
V.rect(186, 771, 918, 783, '#c0281c'); V.rect(918, 771, 2187, 783, '#e23c3f');
reds.forEach(x => V.flag(x, 805, 'rgba(255,110,110,.5)', 'rgba(235,70,80,.8)'));
greens.forEach(x => V.flag(x, 955, '#7fc98a', '#4a9c50'));
[650, 763, 875, 910].forEach(x => V.diamond(x, 806, '#6f70f0'));
crosshair(V);

/* ---- scales ---- */
function scale(id, top, ys, labels) {
  const p = pane(id, top, 0, 1796);
  ys.forEach((y, i) => {
    p.add('line', { x1: 1796, x2: 1801, y1: y + .5, y2: y + .5, stroke: '#777' });
    p.add('text', { x: 1805, y: y + 5 }, labels[i]);
  });
  return p;
}
const A = scale('price-scale', 97, prices, ['96.08', '96.07', '96.06', '96.05', '96.04', '96.03', '96.02', '96.01', '96.00']);
[[1796, 220, 19, '#e6575a', '96.06'], [1796, 257, 19, '#4c525e', '96.05'], [1796, 289, 19, '#000', '96.04'], [1801, 309, 19, '#000', '00:54']].forEach(([x, y, h, fill, t]) => {
  A.add('rect', { x, y, width: 1844 - x, height: h, fill, stroke: 'none' });
  if (x === 1796) A.add('line', { x1: 1796, x2: 1800, y1: y + 9.5, y2: y + 9.5, stroke: '#bbb' });
  A.add('text', { x: 1805, y: y + 13, class: 'light' }, t);
});
scale('rsi-scale', 492, levels, ['160.0000', '140.0000', '120.0000', '100.0000', '80.0000', '60.0000', '40.0000', '20.0000']);
scale('vol-scale', 734, volLevels, ['100', '50', '0']);

const T = pane('time', 813, 0);
['15:10', '15:20', '15:30', '15:40', '15:50', '16:00', '16:10', '16:20', '16:30', '', '16:50', '17:00', '17:10', '17:20'].forEach((t, i) => {
  T.add('line', { x1: ticks[i] + .5, x2: ticks[i] + .5, y1: 813, y2: 816, stroke: '#777' });
  if (t) T.add('text', { x: ticks[i], y: 833, 'text-anchor': 'middle', class: t.endsWith(':00') ? 'bold' : '' }, t);
});
```
